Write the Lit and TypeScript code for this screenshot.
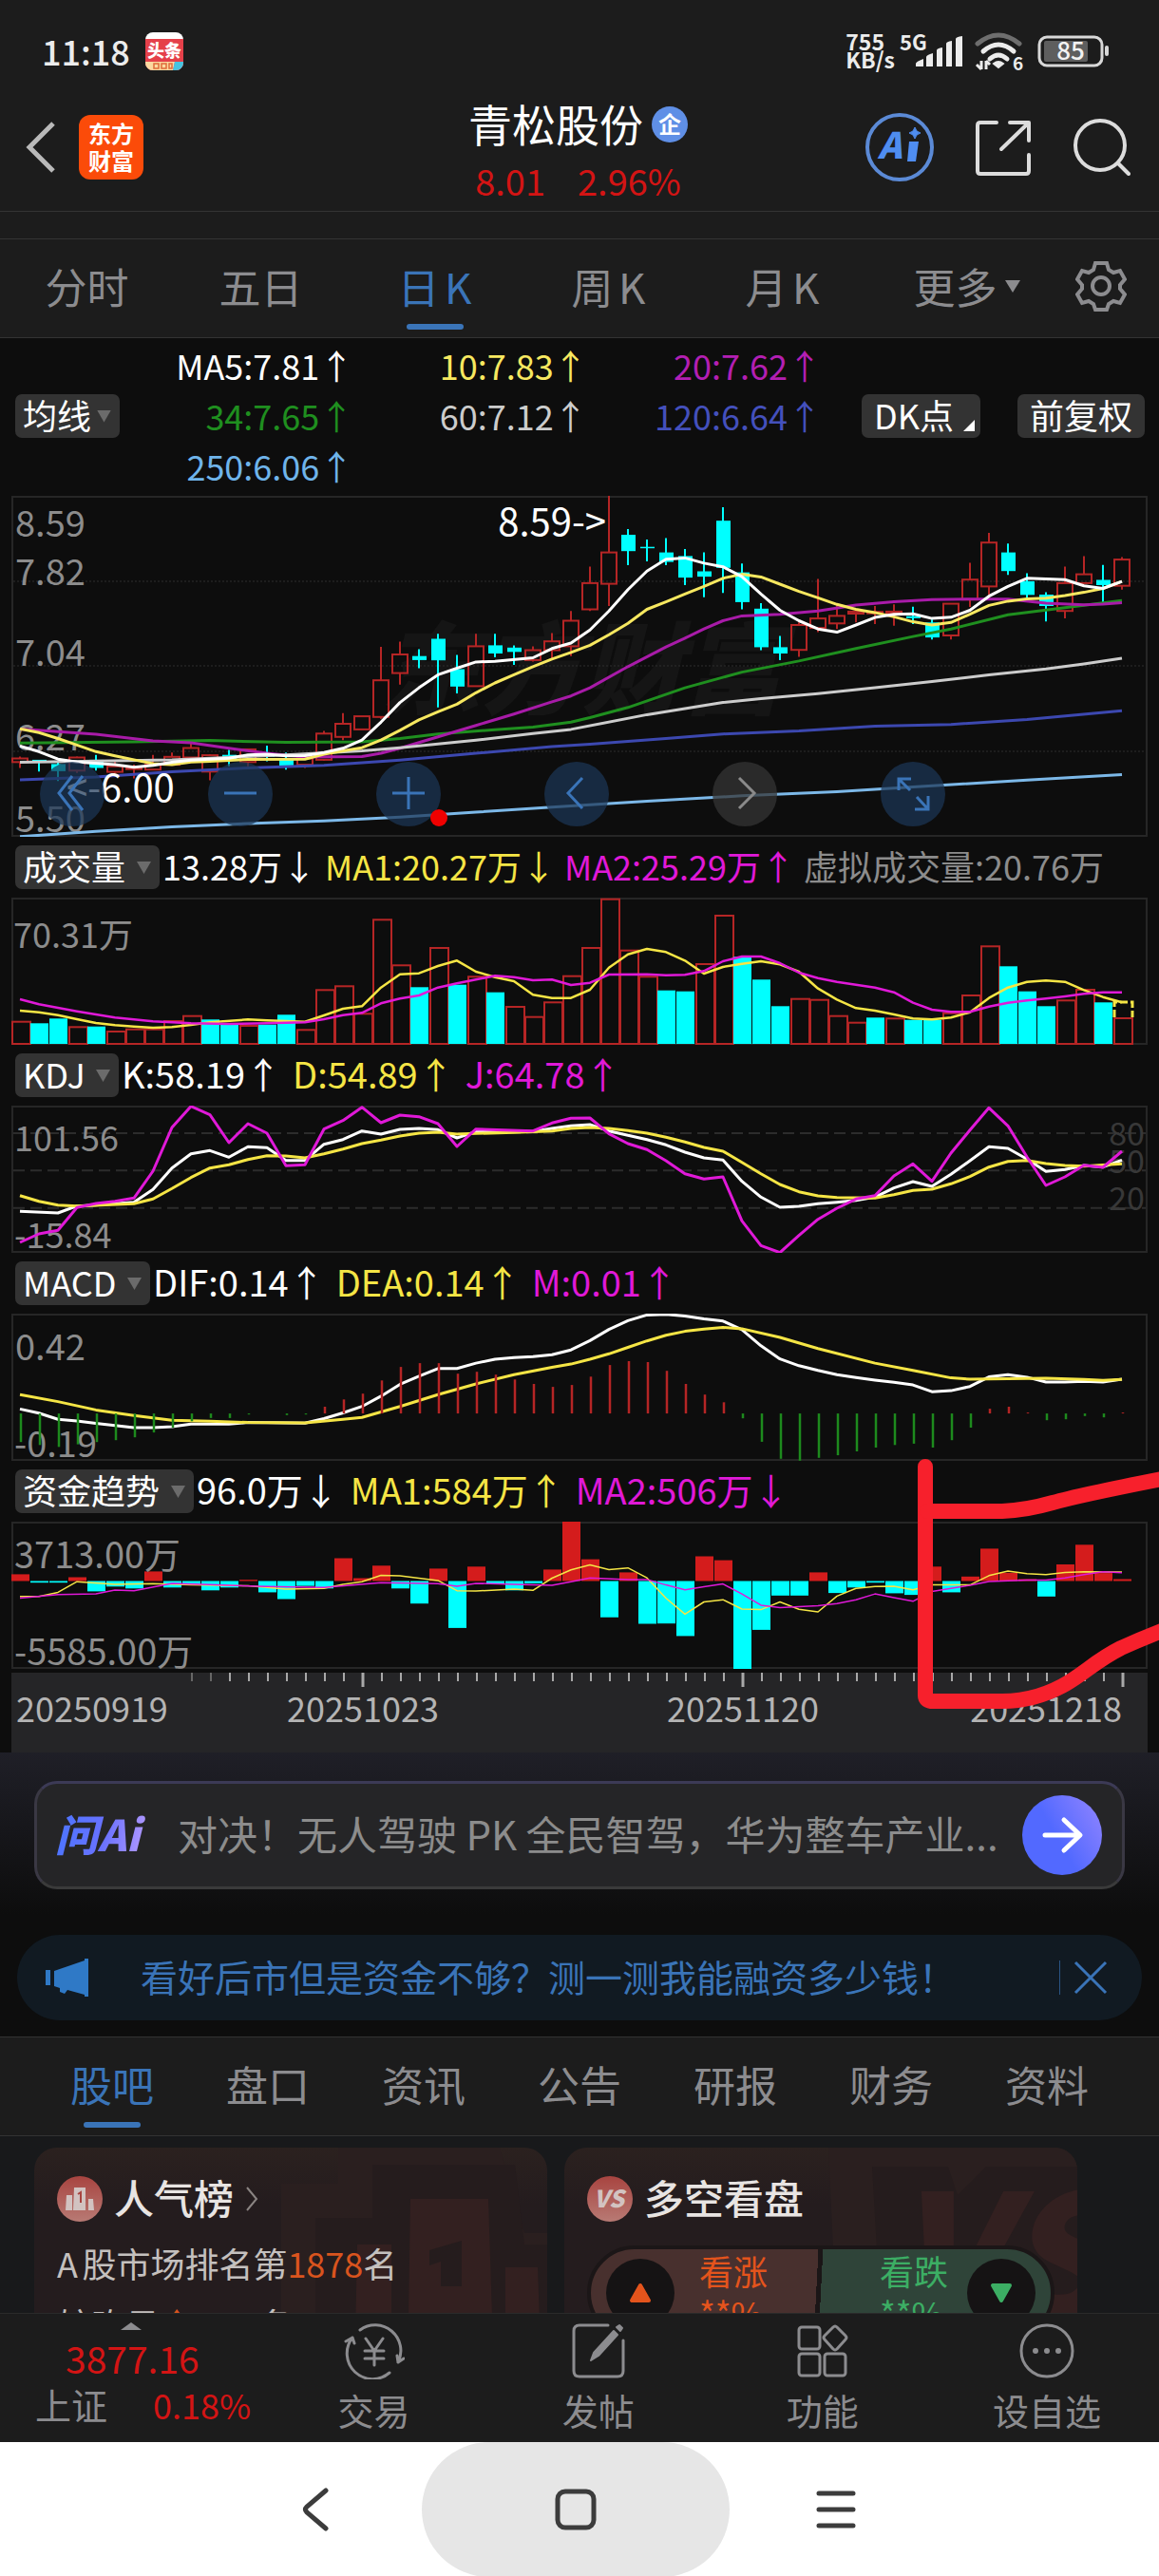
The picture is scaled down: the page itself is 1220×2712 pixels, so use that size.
import { LitElement, html, svg, css, nothing } from "lit";
import { customElement, property } from "lit/decorators.js";

type Point = [number, number];
interface Value { text: string; color: string }

const WHITE = "#ffffff";
const YELLOW = "#f5e545";
const MAGENTA = "#e019d8";
const RED = "#b52525";
const CYAN = "#00ffff";
const STEP = 20;
const WIDTH = 1196;
const xAt = (i: number) => 9 + i * STEP;

/** Parses "index,value index,value" into points. */
const parse = (s: string): Point[] =>
  s.trim().split(/\s+/).map((p) => p.split(",").map(Number) as Point);

/** Builds a mapper from stored chart levels to drawing units. */
const scale = (top: number, unit: number) => (v: number) =>
  Math.round(((v - top) / unit) * 10) / 10;

const line = (s: string, y: (v: number) => number, color: string, width = 3) => svg`
  <polyline fill="none" stroke=${color} stroke-width=${width} stroke-linejoin="round"
    points=${parse(s).map(([i, v]) => `${xAt(i)},${y(v)}`).join(" ")}></polyline>`;

const frame = (h: number) => svg`
  <rect x="1" y="1" width=${WIDTH - 2} height=${h - 2} fill="none" stroke="#262626" stroke-width="2"></rect>`;

const label = (x: number, mid: number, text: string, fill = "#8c8c8c", size = 38, anchor = "start") => svg`
  <text x=${x} y=${mid + Math.round(size * 0.37)} fill=${fill} font-size=${size} text-anchor=${anchor}>${text}</text>`;

// up/down, body top, body bottom, high, low
const CANDLES = `
r,1301,1312,1295,1330 c,1305,1311,1306,1341 c,1318,1340,1310,1370 r,1298,1338,1295,1345
c,1305,1330,1290,1338 r,1325,1342,1310,1345 r,1329,1333,1320,1362 r,1320,1335,1290,1337
r,1296,1320,1283,1322 r,1269,1298,1252,1300 r,1291,1341,1288,1368 c,1290,1308,1275,1325
r,1273,1312,1271,1325 c,1291,1296,1262,1310 c,1305,1323,1283,1335 r,1301,1320,1298,1330
r,1225,1305,1217,1308 r,1195,1235,1162,1245 r,1172,1212,1172,1212 r,1062,1174,960,1180
r,983,1040,944,1075 c,988,1000,967,1025 c,935,1001,920,1145 c,1028,1081,984,1102
r,958,1080,920,1082 c,955,980,920,992 c,962,975,955,1015 r,970,1000,958,1005
r,943,970,918,1000 r,880,958,850,988 r,765,845,714,850 r,671,767,498,835
c,617,667,600,710 c,654,658,632,698 c,671,700,627,710 c,682,748,661,771
c,729,745,671,808 c,574,718,533,795 c,732,823,705,845 c,843,961,826,970
c,961,980,926,1000 r,893,969,885,990 r,873,902,752,915 r,865,888,830,905
r,852,858,848,885 r,853,856,835,890 r,852,856,830,895 c,866,872,837,890
c,885,931,876,937 r,828,925,826,937 r,754,815,703,838 r,641,775,611,800
c,671,728,644,740 c,759,801,735,810 c,800,835,793,882 r,765,850,714,873
r,738,765,682,767 c,755,771,709,825 r,693,773,685,785`;

const MA_LINES: [string, string][] = [
  ["#7cb8e8", "0,1540 4,1524 8,1510 12,1500 16,1492 20,1480 24,1465 28,1450 33,1432 38,1415 43,1403 47,1388 53,1367 58,1350"],
  ["#3c48b0", "0,1366 4,1358 8,1342 12,1330 16,1322 20,1306 24,1285 28,1265 30,1257 34,1240 37,1226 41,1217 45,1202 49,1197 53,1182 58,1155"],
  ["#1f8f1f", "0,1254 6,1250 10,1246 14,1252 18,1250 20,1240 22,1226 25,1213 27,1205 29,1190 30,1176 32,1145 35,1085 38,1037 41,1003 44,965 47,928 49,905 52,862 55,840 58,818"],
  ["#a81ba8", "0,1211 4,1227 7,1247 9,1253 11,1270 13,1285 15,1297 18,1295 19,1285 20,1270 22,1235 24,1200 26,1165 28,1128 29,1110 30,1085 32,1020 34,960 35,933 36,905 37,880 38,865 40,860 42,850 44,832 46,822 48,815 50,814 52,814 54,826 56,831 57,829 58,825"],
  ["#cccccc", "0,1313 8,1305 14,1290 18,1278 20,1268 24,1245 27,1225 29,1212 33,1167 37,1130 39,1118 42,1103 45,1085 48,1066 51,1045 54,1027 56,1012 58,995"],
  ["#f7e860", "0,1210 1,1222 2,1240 3,1260 4,1280 5,1293 6,1305 7,1317 8,1320 9,1312 10,1310 12,1304 15,1303 16,1288 17,1278 18,1268 19,1245 20,1215 21,1183 22,1158 23,1135 24,1100 25,1070 26,1045 27,1020 28,997 29,977 30,955 31,923 32,888 33,845 34,822 35,798 36,775 37,750 38,738 39,746 40,768 41,790 42,810 43,830 44,845 45,855 46,868 47,883 48,893 49,885 50,860 51,833 52,820 53,813 54,811 55,803 56,793 57,781 58,760"],
  ["#ffffff", "0,1263 1,1280 2,1303 3,1312 5,1320 6,1328 7,1322 8,1313 9,1306 11,1300 12,1290 13,1288 14,1293 15,1292 16,1283 17,1270 18,1245 19,1190 20,1130 21,1085 22,1045 23,1025 24,1006 25,1004 27,993 28,965 29,948 30,908 31,850 32,785 33,728 34,692 35,688 36,704 37,715 38,745 39,798 40,848 41,880 42,905 43,915 44,893 45,870 46,860 47,859 48,873 49,869 50,848 51,805 52,775 53,750 55,754 56,773 57,781 58,760"],
];

const VOLUMES = "r580 c588 c573 r597 c598 r611 r604 r604 r578 r562 c576 c593 r593 c592 c561 r606 r480 r468 r555 r258 r402 c474 r347 c466 r438 c490 r533 r565 r519 r436 r347 r193 r355 r438 c484 c487 r398 r245 c378 c450 c534 r508 r511 r562 r583 c570 r570 c577 c577 r553 r497 r342 c408 c487 c534 r513 r479 c522 r569";
const VOL_MA1 = "0,548 1,553 2,562 3,575 4,587 5,594 6,598 7,602 8,600 9,593 10,585 12,576 13,579 15,583 16,563 17,542 18,534 19,475 20,433 21,430 22,407 23,390 24,425 25,442 26,455 27,498 28,508 29,508 30,482 31,412 32,370 33,353 34,363 35,390 36,431 37,410 38,400 39,392 40,402 41,425 42,478 43,513 44,540 45,548 46,560 47,573 48,576 49,570 50,553 51,508 52,475 53,457 54,453 55,457 56,483 57,505 58,522";
const VOL_MA2 = "0,512 1,528 3,550 5,570 7,582 9,588 11,590 13,588 15,585 16,575 17,562 18,555 19,525 20,510 21,500 22,475 23,462 24,450 25,438 26,442 27,452 28,450 29,467 30,460 31,434 33,433 34,436 35,435 36,423 37,392 38,377 39,377 40,398 41,428 42,445 43,457 44,466 45,475 46,490 47,523 48,545 49,552 50,552 51,535 52,523 53,516 54,510 55,503 56,495 57,490 58,490";

const KDJ_K = "0,1182 2,1187 3,1165 4,1162 6,1153 7,1113 8,1045 9,1000 10,990 11,1011 12,978 13,981 14,1021 15,1021 16,970 17,955 18,928 19,938 20,923 21,920 22,924 23,950 24,930 27,930 28,920 29,912 30,908 31,928 32,942 33,955 34,972 35,995 36,1013 37,1020 38,1087 39,1137 40,1169 41,1166 42,1158 43,1153 44,1147 45,1137 46,1108 47,1088 48,1103 49,1065 50,1022 51,978 52,983 53,1017 54,1056 55,1050 56,1037 57,1042 58,1020";
const KDJ_D = "0,1132 1,1150 2,1162 3,1165 6,1158 7,1143 8,1110 9,1075 10,1045 11,1035 12,1018 13,1006 14,1007 15,1013 16,1000 17,985 18,968 19,957 20,944 21,935 22,932 23,938 24,936 26,933 28,928 29,920 30,917 31,920 32,927 33,935 34,948 35,963 36,980 37,992 38,1027 39,1063 40,1097 41,1120 42,1133 43,1138 45,1140 46,1129 47,1116 48,1112 49,1095 50,1072 51,1042 52,1024 53,1021 54,1031 55,1037 56,1039 58,1032";
const KDJ_J = "0,1280 1,1253 2,1242 3,1170 4,1157 5,1150 6,1140 7,1055 8,917 9,850 10,877 11,965 12,905 13,935 14,1038 15,1035 16,922 17,895 18,853 19,902 20,878 21,883 22,905 23,977 24,922 27,928 28,903 29,888 30,887 31,937 32,968 33,987 34,1022 35,1063 36,1080 37,1073 38,1212 39,1290 40,1312 41,1258 42,1207 43,1172 44,1143 45,1132 46,1070 47,1032 48,1087 49,998 50,925 51,855 52,912 53,1010 54,1100 55,1073 56,1036 57,1043 58,992";

const MACD_DIF = "0,480 1,493 2,512 3,517 4,525 6,538 7,538 8,535 9,527 11,527 12,522 15,524 16,510 17,492 18,472 19,440 20,403 21,378 22,354 23,354 24,337 25,325 26,320 27,317 28,311 29,296 30,267 31,232 32,205 33,187 34,185 35,190 36,199 37,206 38,233 39,283 40,324 41,345 42,360 43,373 44,382 45,390 46,397 47,405 48,426 49,423 50,410 51,380 52,373 53,381 54,396 55,396 56,394 57,396 58,387";
const MACD_DEA = "0,435 2,457 4,483 6,500 8,515 10,518 12,522 15,523 17,512 18,506 20,472 22,435 24,402 26,373 28,350 29,340 30,325 31,308 32,288 33,268 34,250 35,238 36,231 37,226 38,230 40,257 42,292 45,337 47,360 49,383 50,387 54,384 56,388 57,391 58,388";
const MACD_BARS = [583, 592, 598, 590, 583, 577, 568, 553, 538, 518, 508, 508, 497, 494, 499, 497, 473, 450, 432, 391, 349, 337, 337, 370, 364, 373, 388, 402, 411, 405, 379, 343, 331, 334, 361, 402, 435, 459, 509, 582, 635, 641, 632, 624, 612, 600, 592, 588, 600, 577, 538, 479, 473, 491, 515, 512, 502, 506, 491];

const FUND_BARS = [994, 1020, 1020, 1003, 1047, 1032, 1038, 985, 1035, 1028, 1044, 1035, 1011, 1050, 1071, 1030, 1038, 944, 1006, 967, 1038, 1085, 976, 1161, 970, 1025, 1044, 1022, 979, 830, 947, 1128, 988, 1148, 1147, 1186, 938, 950, 1291, 1167, 1060, 1060, 988, 1052, 1035, 1020, 1053, 1058, 970, 1050, 1001, 914, 989, 1009, 1063, 963, 902, 990, 1009];
const FUND_MA1 = "0,1063 1,1063 2,1050 3,1017 5,1025 7,1023 9,1027 12,1030 14,1040 16,1038 17,1025 18,1017 19,997 20,999 22,1013 23,1045 24,1046 26,1040 27,1044 28,1006 29,980 30,965 31,979 32,974 33,1005 34,1068 35,1118 36,1080 37,1073 38,1102 39,1104 40,1080 41,1103 42,1111 43,1062 44,1038 45,1032 46,1031 47,1042 48,1027 50,1027 51,998 52,984 53,992 54,995 55,988 56,986 58,987";
const FUND_MA2 = "0,1068 2,1057 4,1055 5,1043 6,1045 8,1022 10,1026 13,1032 16,1035 19,1020 22,1023 23,1031 24,1022 26,1025 28,1028 29,1017 30,1005 32,1010 33,1010 34,1027 35,1042 36,1033 37,1024 38,1055 39,1090 40,1098 42,1092 43,1085 44,1073 45,1055 46,1067 47,1078 48,1047 49,1038 50,1028 51,1016 53,1012 54,1012 55,1005 56,995 57,986 58,989";

const FONT = css`"Noto Sans CJK SC", "Noto Sans", sans-serif`;

const reset = css`
  * { box-sizing: border-box; margin: 0; padding: 0; }
  button, select, input { font: inherit; color: inherit; border: 0; background: none; }
  button, select { cursor: pointer; }
  a { color: inherit; text-decoration: none; }
  svg { display: block; }
`;

@customElement("indicator-select")
class IndicatorSelect extends LitElement {
  @property() name = "";
  static styles = [reset, css`
    :host { display: block; position: relative; height: 46px; border-radius: 7px; background: #333333; font-family: ${FONT}; }
    select {
      display: block; appearance: none; height: 42px; line-height: 42px; padding: 0 35px 0 8px;
      color: #ffffff; font-size: 36px;
    }
    :host([tight]) select { padding-right: 29px; }
    :host::after {
      content: ""; position: absolute; right: 9px; top: 17px; width: 15px; height: 13px;
      background: #6b6b6b; clip-path: polygon(0 0, 100% 0, 50% 100%); pointer-events: none;
    }
  `];
  render() {
    return html`<select aria-label="指标"><option>${this.name}</option></select>`;
  }
}

@customElement("indicator-panel")
class IndicatorPanel extends LitElement {
  @property() name = "";
  @property({ attribute: false }) values: Value[] = [];
  @property({ attribute: false }) plot: unknown = nothing;
  static styles = [reset, css`
    :host { display: block; font-family: ${FONT}; }
    .panel { padding: 0 12px; }
    .head { display: flex; align-items: center; gap: 3px; height: 64px; padding-left: 4px; }
    .values { display: flex; gap: 12px; padding-bottom: 5px; font-size: 38px; line-height: 46px; white-space: nowrap; }
    :host([dense]) .values { gap: 9px; font-size: 36px; }
    .white { color: #ffffff; } .yellow { color: #f5e545; } .magenta { color: #e019d8; } .gray { color: #8c8c8c; }
    .plot { width: 100%; height: auto; }
  `];
  render() {
    return html`
      <div class="panel">
        <div class="head">
          <indicator-select name=${this.name}></indicator-select>
          <div class="values">${this.values.map((v) => html`<span class=${v.color}>${v.text}</span>`)}</div>
        </div>
        <svg class="plot" viewBox="0 0 1196 155" role="img" aria-label=${this.name}>${frame(155)}${this.plot}</svg>
      </div>`;
  }
}

@customElement("app-root")
class AppRoot extends LitElement {
  static styles = [reset, css`
    :host {
      display: flex; flex-direction: column; min-height: 100vh; overflow: hidden;
      background: #0d0d0d; color: #8c8c8f; font-family: ${FONT};
    }
    .status {
      display: flex; justify-content: space-between; align-items: flex-start; height: 98px;
      padding: 30px 50px 0 44px; background: #1c1c1c; color: #ececec;
    }
    .status-side { display: flex; align-items: center; height: 48px; }
    .clock { font-size: 36px; font-weight: 500; line-height: 46px; margin-right: 16px; padding-bottom: 2px; }
    .rate { font-size: 23px; font-weight: 700; line-height: 19px; margin-right: 4px; padding-bottom: 2px; }

    .header {
      display: grid; grid-template-columns: 1fr auto 1fr; background: #1c1c1c;
      padding: 0 30px 0 27px; border-bottom: 1px solid #333333;
    }
    .header-side { display: flex; align-items: center; height: 114px; }
    .header-side.left { gap: 24px; }
    .header-side.right { justify-content: flex-end; gap: 42px; }
    .brand {
      width: 68px; height: 68px; border-radius: 12px; background: #fb4b09; color: #ffffff;
      font-size: 24px; font-weight: 700; line-height: 29px; text-align: center; padding-top: 4px;
    }
    .title { text-align: center; }
    .name {
      display: flex; align-items: center; justify-content: center; gap: 9px;
      font-size: 46px; font-weight: 400; line-height: 62px; color: #ffffff;
    }
    .badge {
      width: 38px; height: 38px; border-radius: 50%; background: #5f8fe6; color: #ffffff;
      font-size: 24px; font-weight: 700; line-height: 35px; margin-top: 3px;
    }
    .quote {
      display: flex; justify-content: center; gap: 34px; padding-bottom: 2px;
      font-size: 38px; line-height: 60px; color: #d31414;
    }
    .strip { height: 28px; background: #1c1c1c; }

    .periods {
      display: grid; grid-template-columns: repeat(6, 3fr) 2fr; background: #1c1c1c;
      border-top: 1px solid #333333; border-bottom: 1px solid #333333;
    }
    .tab {
      display: flex; align-items: center; justify-content: center; gap: 8px; position: relative;
      height: 103px; padding-bottom: 5px; font-size: 44px; line-height: 60px; color: #8c8c8f;
      text-autospace: normal;
    }
    .tab.more { padding-left: 22px; }
    .tab.on { color: #3a74b8; }
    .tab.on::after {
      content: ""; position: absolute; left: 50%; bottom: 8px; width: 60px; height: 6px;
      margin-left: -30px; border-radius: 3px; background: #3a74b8;
    }

    .charts { position: relative; }
    .legend-row { display: flex; align-items: center; padding: 2px 15px 5px 16px; }
    .legend {
      flex: 1; display: grid; grid-template-columns: repeat(3, 1fr);
      font-size: 36px; line-height: 53px; text-align: right; white-space: nowrap;
    }
    .c5 { color: #ffffff; } .c10 { color: #f7e860; } .c20 { color: #b31fb3; } .c34 { color: #1f8f1f; }
    .c60 { color: #cccccc; } .c120 { color: #4450bc; } .c250 { color: #6fb4ea; }
    .chip {
      height: 46px; line-height: 42px; padding: 0 13px 4px; border-radius: 7px; background: #333333;
      color: #ffffff; font-size: 36px; white-space: nowrap;
    }
    .chip.dk { display: flex; align-items: flex-end; gap: 10px; padding: 0 6px 4px 13px; margin: 0 39px 0 42px; }
    .chip.dk svg { margin-bottom: 3px; }
    .price { position: relative; margin: 0 12px; }
    .plot { width: 100%; height: auto; }
    .pin { position: absolute; inset: 0; pointer-events: none; }
    .tools { position: absolute; left: 30px; bottom: 11px; display: flex; gap: 109px; }
    .tool {
      width: 68px; height: 68px; border-radius: 50%; background: rgba(28, 54, 86, 0.72);
      display: grid; place-items: center; stroke: #3a74b8;
    }
    .tool.off { background: rgba(52, 52, 52, 0.75); stroke: #8a8a8a; }
    .axis { margin: 4px 12px 0; background: #252527; }
    .mark { position: absolute; right: 0; bottom: 34px; pointer-events: none; }

    .promo { background: linear-gradient(#1f1f27 0, #0d0d0d 170px); padding: 30px 18px 17px; }
    .ask {
      display: flex; align-items: center; height: 114px; margin: 0 18px; padding: 0 21px 0 19px;
      border: 3px solid #3a3844; border-top-color: #3c3a56; border-bottom-color: #3a3a3a;
      border-radius: 24px; background: #252527;
    }
    .ask-logo {
      width: 104px; font-size: 45px; font-weight: 900; font-style: italic; line-height: 60px; white-space: nowrap;
      background: linear-gradient(100deg, #4f74ff 10%, #6a72ff 50%, #b49aff 90%);
      -webkit-background-clip: text; background-clip: text; color: transparent; padding-bottom: 4px;
    }
    .ask-input {
      flex: 1; min-width: 0; margin-left: 25px; padding-bottom: 4px;
      font-size: 42px; line-height: 60px; outline: none;
    }
    .ask-input::placeholder { color: #8c8c8c; opacity: 1; }
    .ask-go {
      width: 84px; height: 84px; border-radius: 50%; display: grid; place-items: center;
      background: linear-gradient(60deg, #5269ff 45%, #9486ff 100%);
    }
    .banner {
      display: flex; align-items: center; height: 90px; margin-top: 48px; padding: 0 36px 0 30px;
      border-radius: 45px; background: #111a22; color: #3a74b8;
    }
    .banner-link { flex: 1; margin-left: 54px; padding-bottom: 5px; font-size: 39px; line-height: 56px; white-space: nowrap; }
    .banner-close { display: flex; align-items: center; gap: 14px; }
    .rule { width: 1px; height: 36px; background: #2a5484; }

    .sections {
      display: grid; grid-template-columns: repeat(7, 1fr); padding: 0 36px; background: #1c1c1c;
      border-top: 1px solid #333333; border-bottom: 1px solid #333333;
    }
    .cards {
      flex: 1 1 186px; height: 186px; overflow: hidden; display: grid; grid-template-columns: 1fr 1fr; gap: 18px;
      padding: 12px 86px 0 36px; background: #18191b;
    }
    .card {
      position: relative; height: 300px; border-radius: 24px; padding: 24px; overflow: hidden;
      background: linear-gradient(#2b211f, #241c1e 60px, #241c1e); color: #c4c0be;
    }
    .decor { position: absolute; right: 0; top: 0; }
    .card-title {
      position: relative; display: flex; align-items: center; gap: 12px; font-size: 42px; font-weight: 500;
      line-height: 60px; color: #e8e4e2;
    }
    .card-title span { line-height: 56px; padding-bottom: 4px; }
    .rank { position: relative; font-size: 36px; line-height: 64px; white-space: nowrap; }
    .rank.first { margin-top: 5px; }
    .market { text-autospace: normal; }
    .hot { color: #d9541e; }
    .vote {
      position: relative; display: grid; grid-template-columns: 1fr 1fr; height: 100px; margin-top: 19px;
      border: 4px solid #1b1617; border-radius: 50px; overflow: hidden;
      background: linear-gradient(93deg, #48302e 0 49%, #1b1617 49% 50%, #2f4439 50%);
    }
    .side { display: flex; align-items: flex-start; padding: 0 16px; gap: 26px; font-size: 36px; line-height: 44px; }
    .side.down { justify-content: flex-end; gap: 20px; }
    .up-text { color: #e4541c; text-align: left; }
    .down-text { color: #3cae64; text-align: left; }
    .knob { width: 72px; height: 72px; margin-top: 10px; border-radius: 50%; background: #151314; display: grid; place-items: center; }

    .bottom {
      display: grid; grid-template-columns: 7fr repeat(4, 6fr); height: 136px;
      background: #1c1c1c; border-top: 1px solid #2a2a2a;
    }
    .index {
      display: grid; grid-template-columns: auto auto; justify-content: start; align-content: start;
      column-gap: 48px; padding-left: 37px;
    }
    .index-arrow { grid-column: 1 / 3; margin-left: 90px; padding-top: 9px; }
    .index-value { grid-column: 1 / 3; font-size: 39px; line-height: 50px; color: #d31414; margin-top: 4px; padding-left: 32px; }
    .index-name { font-size: 38px; line-height: 48px; }
    .index-change { font-size: 36px; line-height: 48px; color: #d31414; }
    .action { display: flex; flex-direction: column; align-items: center; padding-top: 9px; font-size: 38px; line-height: 56px; color: #8c8c8f; }
    .action svg { margin-bottom: 4px; }
    .nav { display: flex; justify-content: center; height: 142px; padding-right: 8px; background: #ffffff; }
    .nav-button { width: 224px; display: grid; place-items: center; }
    .nav-button.home { width: 324px; border-radius: 71px; background: #e6e6e6; }
  `];

  private status() {
    return html`
      <div class="status">
        <div class="status-side">
          <span class="clock">11:18</span>
          <svg width="40" height="40" viewBox="0 0 40 40" role="img" aria-label="头条">
            <defs><clipPath id="ttc"><rect width="40" height="40" rx="8"></rect></clipPath></defs>
            <g clip-path="url(#ttc)">
              <rect width="40" height="40" fill="#ffffff"></rect>
              <rect y="7" width="40" height="33" fill="#e5404a"></rect>
              <path d="M0 31h31l-2 9H0z" fill="#fbd9a0"></path><path d="M31 31h9v9H29z" fill="#46c4e0"></path>
              <text x="20" y="26" text-anchor="middle" font-size="18" font-weight="900" fill="#ffffff">头条</text>
              <path d="M9 33h5v5H9zM17 33h5v5h-5zM25 33h3v5h-3z" fill="none" stroke="#e06a3a" stroke-width="1.5"></path>
            </g>
          </svg>
        </div>
        <div class="status-side">
          <span class="rate">755<br />KB/s</span>
          <svg width="224" height="46" viewBox="0 0 224 46" role="img" aria-label="5G 信号 WiFi 电量">
            <text x="1" y="22" font-size="22" font-weight="700" fill="#ececec">5G</text>
            <g fill="#ececec">
              <path d="M18 39v-3q0-2 8-5v8zM29 39V29q0-2 7-4v14zM40 39V22q0-2 6-3v20zM50 39V15q0-2 6-3v27zM60 39V10q0-2 7-3v32z"></path>
              <path d="M105 40l-5-4q5-4 10 0z" stroke="#ececec" stroke-width="2"></path>
              <path d="M87 42v-9M87 42l-5-5M92 42v-9M92 33l4 4" fill="none" stroke="#ececec" stroke-width="3"></path>
              <text x="120" y="43" font-size="19" font-weight="700">6</text>
            </g>
            <g fill="none" stroke-width="5" stroke-linecap="round">
              <path d="M96 31q9-8 18 0" stroke="#ececec"></path><path d="M89 23q16-14 32 0" stroke="#ececec"></path>
              <path d="M83 15q22-18 44 0" stroke="#6e6e6e"></path>
            </g>
            <rect x="148" y="8" width="66" height="30" rx="8" fill="none" stroke="#d8d8d8" stroke-width="3"></rect>
            <rect x="153" y="12" width="46" height="22" rx="2" fill="#5e5e5e"></rect>
            <rect x="217" y="17" width="4" height="11" rx="2" fill="#d8d8d8"></rect>
            <text x="181" y="32" text-anchor="middle" font-size="26" font-weight="500" fill="#f2f2f2">85</text>
          </svg>
        </div>
      </div>`;
  }

  private header() {
    return html`
      <header class="header">
        <div class="header-side left">
          <button aria-label="返回"><svg width="32" height="56" viewBox="0 0 32 56"><path d="M29 3L4 28l25 25" fill="none" stroke="#b9b9b9" stroke-width="5"></path></svg></button>
          <div class="brand">东方<br />财富</div>
        </div>
        <div class="title">
          <h1 class="name">青松股份<span class="badge">企</span></h1>
          <div class="quote"><span>8.01</span><span>2.96%</span></div>
        </div>
        <div class="header-side right">
          <button aria-label="AI">
            <svg width="74" height="74" viewBox="0 0 74 74">
              <circle cx="37" cy="37" r="34" fill="none" stroke="#5b8ad6" stroke-width="4"></circle>
              <text x="14" y="49" font-size="38" font-weight="900" font-style="italic" fill="#4f8df0">A</text>
              <path d="M47 31h10l-3 21h-9z" fill="#4f8df0"></path>
              <path d="M53 16q1 5 6 6-5 1-6 6-1-5-6-6 5-1 6-6z" fill="#4f8df0" stroke="#4f8df0"></path>
            </svg>
          </button>
          <button aria-label="分享">
            <svg width="60" height="60" viewBox="0 0 60 60" fill="none" stroke="#dcdcdc" stroke-width="4" stroke-linecap="round" stroke-linejoin="round">
              <path d="M23 4H6q-3 0-3 3v48q0 3 3 3h48q3 0 3-3V38M37 4h20v19M56 5L28 32"></path>
            </svg>
          </button>
          <button aria-label="搜索">
            <svg width="62" height="62" viewBox="0 0 62 62" fill="none" stroke="#dcdcdc" stroke-width="4" stroke-linecap="round">
              <circle cx="30" cy="29" r="26"></circle><path d="M49 48l11 11"></path>
            </svg>
          </button>
        </div>
      </header>`;
  }

  private periods() {
    const tabs = ["分时", "五日", "日K", "周K", "月K"];
    return html`
      <div class="strip"></div>
      <nav class="periods">
        ${tabs.map((t) => html`<button class="tab ${t === "日K" ? "on" : ""}">${t}</button>`)}
        <button class="tab more" aria-haspopup="true">更多<svg width="16" height="13" viewBox="0 0 16 13"><path d="M0 0h16L8 13z" fill="#8c8c8f"></path></svg></button>
        <button class="tab" aria-label="设置">
          <svg width="54" height="54" viewBox="0 0 54 54" fill="none" stroke="#8c8c8f" stroke-width="4">
            <path d="M21 3h12l2 7 5 3 7-2 5 9-5 6v4l5 6-5 9-7-2-5 3-2 6H21l-2-6-5-3-7 2-5-9 5-6v-4l-5-6 5-9 7 2 5-3z"></path>
            <circle cx="27" cy="27" r="9"></circle>
          </svg>
        </button>
      </nav>`;
  }

  private price() {
    const y = scale(498, 2.904);
    const candles = CANDLES.trim().split(/\s+/).map((row, i) => {
      const [kind, ...n] = row.split(",");
      const [top, bottom, high, low] = n.map(Number).map(y);
      const x = xAt(i);
      const h = Math.max(bottom - top, 1.5);
      return kind === "c"
        ? svg`<path d=${`M${x} ${high}V${low}`} stroke=${CYAN} stroke-width="2"></path>
              <rect x=${x - 7} y=${top} width="15" height=${h} fill=${CYAN}></rect>`
        : svg`<path d=${`M${x} ${high}V${top}M${x} ${bottom}V${low}`} stroke=${RED} stroke-width="2"></path>
              <rect x=${x - 8} y=${top} width="16" height=${h} fill="none" stroke=${RED} stroke-width="2"></rect>`;
    });
    return svg`
      <text x="388" y="222" font-size="106" font-weight="900" font-style="italic" fill="#151515">东方财富</text>
      ${[90, 179, 269].map((g) => svg`<path d=${`M2 ${g}H1194`} stroke="#2e2e2e" stroke-width="1" stroke-dasharray="2 2"></path>`)}
      ${frame(359)}
      ${candles}
      ${label(4, 29, "8.59")}${label(4, 80, "7.82")}${label(4, 165, "7.04")}${label(4, 254, "6.27")}${label(4, 340, "5.50")}
      ${MA_LINES.map(([color, pts]) => line(pts, y, color))}
      ${label(626, 27, "8.59->", WHITE, 40, "end")}${label(58, 307, "<-6.00", WHITE, 40)}`;
  }

  private volume() {
    const y = scale(191, 3);
    return svg`
      ${VOLUMES.split(" ").map((v, i) => {
        const top = y(Number(v.slice(1)));
        return v[0] === "c"
          ? svg`<rect x=${xAt(i) - 9} y=${top} width="19" height=${154 - top} fill=${CYAN}></rect>`
          : svg`<rect x=${xAt(i) - 8} y=${top + 1} width="19" height=${153 - top} fill="none" stroke=${RED} stroke-width="2"></rect>`;
      })}
      <path d="M1161 126V110H1180V126" fill="none" stroke="#f5e545" stroke-width="3" stroke-dasharray="8 3"></path>
      ${line(VOL_MA1, y, YELLOW, 2.5)}${line(VOL_MA2, y, MAGENTA, 2.5)}
      ${label(2, 40, "70.31万", "#8c8c8c", 36)}`;
  }

  private kdj() {
    const y = scale(848, 3);
    return svg`
      ${[935, 1053, 1171].map((g) => svg`<path d=${`M2 ${y(g)}H1194`} stroke="#2c2c2c" stroke-width="2" stroke-dasharray="12 6"></path>`)}
      ${label(1193, 29, "80", "#383838", 34, "end")}${label(1193, 58, "50", "#383838", 34, "end")}${label(1193, 97, "20", "#383838", 34, "end")}
      ${label(3, 35, "101.56", "#8c8c8c", 36)}${label(3, 137, "-15.84", "#8c8c8c", 36)}
      ${line(KDJ_K, y, WHITE)}${line(KDJ_D, y, YELLOW)}${line(KDJ_J, y, MAGENTA)}`;
  }

  private macd() {
    const y = scale(183, 2.958);
    return svg`
      ${label(4, 35, "0.42")}${label(3, 137, "-0.19")}
      ${line(MACD_DIF, y, WHITE)}${line(MACD_DEA, y, YELLOW)}
      ${MACD_BARS.map((v, i) => svg`<path d=${`M${xAt(i) + 1} ${y(494)}V${y(v)}`} stroke=${v < 494 ? RED : "#1d8a1d"} stroke-width="2.5"></path>`)}`;
  }

  private fund() {
    const y = scale(830, 2.958);
    const zero = y(1015);
    return svg`
      ${FUND_BARS.map((v, i) => svg`<rect x=${xAt(i) - 9} y=${Math.min(zero, y(v))} width="19" height=${Math.abs(y(v) - zero)} fill=${v < 1015 ? "#d41c1c" : CYAN}></rect>`)}
      ${line(FUND_MA1, y, YELLOW, 1.5)}${line(FUND_MA2, y, MAGENTA, 1.5)}
      ${label(3, 35, "3713.00万")}${label(3, 137, "-5585.00万")}`;
  }

  private axis() {
    return svg`
      ${Array.from({ length: 50 }, (_, k) => k + 9).map((i) => {
        const major = i % 20 === 18;
        return svg`<path d=${`M${xAt(i) + 1} 0v${major ? 15 : 9}`} stroke=${i < 11 ? "#666666" : "#a8a8a8"} stroke-width=${major ? 3 : 2}></path>`;
      })}
      ${label(5, 39, "20250919", "#b4b4b4", 36)}${label(370, 39, "20251023", "#b4b4b4", 36, "middle")}
      ${label(770, 39, "20251120", "#b4b4b4", 36, "middle")}${label(1169, 39, "20251218", "#b4b4b4", 36, "end")}`;
  }

  private charts() {
    const tools = [
      ["最早", svg`<path d="M33 14L19 32l14 18M44 14L30 32l14 18"></path>`],
      ["缩小", svg`<path d="M16 32h34"></path>`],
      ["放大", svg`<path d="M16 32h34M33 15v34"></path>`],
      ["向左", svg`<path d="M39 16L24 32l15 16"></path>`],
      ["向右", svg`<path d="M27 16l16 16-16 16"></path>`],
      ["全屏", svg`<path d="M31 17H18v12M18 17l12 12M35 49h14V35M49 49L37 36"></path>`],
    ] as const;
    return html`
      <main class="charts">
        <div class="legend-row">
          <indicator-select tight name="均线"></indicator-select>
          <div class="legend">
            <span class="c5">MA5:7.81↑</span><span class="c10">10:7.83↑</span><span class="c20">20:7.62↑</span>
            <span class="c34">34:7.65↑</span><span class="c60">60:7.12↑</span><span class="c120">120:6.64↑</span>
            <span class="c250">250:6.06↑</span>
          </div>
          <button class="chip dk">DK点<svg width="12" height="12" viewBox="0 0 12 12"><path d="M12 0v12H0z" fill="#ffffff"></path></svg></button>
          <button class="chip">前复权</button>
        </div>
        <div class="price">
          <svg class="plot" viewBox="0 0 1196 359" role="img" aria-label="日K线">${this.price()}</svg>
          <div class="tools">
            ${tools.map(([name, icon]) => html`
              <button class="tool ${name === "向右" ? "off" : ""}" aria-label=${name}>
                <svg width="66" height="66" viewBox="0 0 66 66" fill="none" stroke-width="3">${icon}</svg>
              </button>`)}
          </div>
          <svg class="plot pin" viewBox="0 0 1196 359" aria-hidden="true"><circle cx="450" cy="339" r="9" fill="#f00000"></circle></svg>
        </div>
        <indicator-panel dense name="成交量" .plot=${this.volume()} .values=${[
          { text: "13.28万↓", color: "white" }, { text: "MA1:20.27万↓", color: "yellow" },
          { text: "MA2:25.29万↑", color: "magenta" }, { text: "虚拟成交量:20.76万", color: "gray" }]}></indicator-panel>
        <indicator-panel name="KDJ" .plot=${this.kdj()} .values=${[
          { text: "K:58.19↑", color: "white" }, { text: "D:54.89↑", color: "yellow" }, { text: "J:64.78↑", color: "magenta" }]}></indicator-panel>
        <indicator-panel name="MACD" .plot=${this.macd()} .values=${[
          { text: "DIF:0.14↑", color: "white" }, { text: "DEA:0.14↑", color: "yellow" }, { text: "M:0.01↑", color: "magenta" }]}></indicator-panel>
        <indicator-panel name="资金趋势" .plot=${this.fund()} .values=${[
          { text: "96.0万↓", color: "white" }, { text: "MA1:584万↑", color: "yellow" }, { text: "MA2:506万↓", color: "magenta" }]}></indicator-panel>
        <div class="axis"><svg class="plot" viewBox="0 0 1196 84" role="img" aria-label="日期">${this.axis()}</svg></div>
        <svg class="mark" width="254" height="280" viewBox="0 0 254 280" fill="none" stroke="#f7202c" stroke-width="16" stroke-linecap="round" stroke-linejoin="round" aria-hidden="true">
          <path d="M8 13V254q0 6 8 6H89Q122 260 152 244C176 231 186 218 214 204Q236 194 262 184"></path>
          <path d="M10 60H89Q114 59 142 51T262 25"></path>
        </svg>
      </main>`;
  }

  private promo() {
    return html`
      <section class="promo">
        <form class="ask" @submit=${(e: Event) => e.preventDefault()}>
          <span class="ask-logo">问Ai</span>
          <input class="ask-input" type="text" aria-label="问Ai" placeholder="对决！无人驾驶 PK 全民智驾，华为整车产业..." />
          <button class="ask-go" aria-label="发送">
            <svg width="46" height="46" viewBox="0 0 46 46" fill="none" stroke="#ffffff" stroke-width="5" stroke-linecap="round" stroke-linejoin="round"><path d="M5 23h36M25 7l17 16-17 16"></path></svg>
          </button>
        </form>
        <div class="banner">
          <svg width="46" height="40" viewBox="0 0 46 40" fill="#2f79c6"><path d="M0 12h5v16H0zM9 13L41 2V0h4v40h-4v-2l-18-5-3 4-5-2v-4l-6-2z"></path></svg>
          <a class="banner-link" href="#">看好后市但是资金不够？测一测我能融资多少钱！</a>
          <div class="banner-close">
            <span class="rule"></span>
            <button aria-label="关闭"><svg width="36" height="36" viewBox="0 0 36 36" stroke="#3a74b8" stroke-width="3"><path d="M2 2l32 32M34 2L2 34"></path></svg></button>
          </div>
        </div>
      </section>`;
  }

  private cards() {
    const tabs = ["股吧", "盘口", "资讯", "公告", "研报", "财务", "资料"];
    return html`
      <nav class="sections">${tabs.map((t, i) => html`<a href="#" class="tab ${i === 0 ? "on" : ""}">${t}</a>`)}</nav>
      <section class="cards">
        <article class="card">
          <svg class="decor" width="280" height="300" viewBox="0 0 280 300" aria-hidden="true">
            <path d="M0 38h60V0h170l26 90h24v210H0z" fill="#2a1f1f"></path>
            <path d="M36 74h60V18h150l10 84h24v198H36z" fill="#251c1d"></path>
            <path d="M136 54h82l8 246h-94zM80 102h36v198H76zM236 126h34l6 174h-40z" fill="#332020"></path>
            <path d="M156 108l34-10v48h-22v-26l-12 4z" fill="#251c1d"></path>
          </svg>
          <h2 class="card-title">
            <svg width="48" height="48" viewBox="0 0 48 48">
              <defs><linearGradient id="g1" x2="0" y2="1"><stop stop-color="#a84440"></stop><stop offset="1" stop-color="#b87a74"></stop></linearGradient></defs>
              <circle cx="24" cy="24" r="24" fill="url(#g1)"></circle>
              <path d="M10 20h6v16H9zM18 12h12v24H17zM33 24h5l1 12h-6z" fill="#d2c3c1"></path>
              <path d="M22 19l3-2v11" fill="none" stroke="#a84440" stroke-width="2"></path>
            </svg>
            <span>人气榜</span>
            <svg width="14" height="26" viewBox="0 0 14 26"><path d="M2 1l10 12L2 25" fill="none" stroke="#8a8482" stroke-width="2"></path></svg>
          </h2>
          <p class="rank first"><span class="market">A股市场排名第</span><span class="hot">1878</span>名</p>
          <p class="rank">较昨日<span class="hot">↑776</span> 名</p>
        </article>
        <article class="card">
          <svg class="decor" width="280" height="300" viewBox="0 0 280 300" aria-hidden="true">
            <path d="M18 0h262v300H32z" fill="#2a1f1f"></path>
            <path d="M64 20h80l10 30 30-30h96v280H80z" fill="#251c1d"></path>
            <text x="84" y="180" font-size="180" font-weight="900" font-style="italic" fill="#332020">VS</text>
          </svg>
          <h2 class="card-title">
            <svg width="48" height="48" viewBox="0 0 48 48"><circle cx="24" cy="24" r="24" fill="url(#g2)"></circle>
              <defs><linearGradient id="g2" x2="0" y2="1"><stop stop-color="#a84440"></stop><stop offset="1" stop-color="#b87a74"></stop></linearGradient></defs>
              <text x="23" y="33" text-anchor="middle" font-size="25" font-weight="900" font-style="italic" fill="#d2c3c1">VS</text>
            </svg>
            <span>多空看盘</span>
          </h2>
          <div class="vote">
            <button class="side">
              <span class="knob"><svg width="24" height="22" viewBox="0 0 24 22"><path d="M12 3L3 19h18z" fill="#e4541c" stroke="#e4541c" stroke-width="4" stroke-linejoin="round"></path></svg></span>
              <span class="up-text">看涨<br />**%</span>
            </button>
            <button class="side down">
              <span class="down-text">看跌<br />**%</span>
              <span class="knob"><svg width="24" height="22" viewBox="0 0 24 22"><path d="M12 19L3 3h18z" fill="#3cae64" stroke="#3cae64" stroke-width="4" stroke-linejoin="round"></path></svg></span>
            </button>
          </div>
        </article>
      </section>`;
  }

  private bottom() {
    const icon = (body: unknown) => html`<svg width="64" height="60" viewBox="0 0 64 60" fill="none" stroke="#8c8c8f" stroke-width="3" stroke-linecap="round" stroke-linejoin="round">${body}</svg>`;
    return html`
      <footer class="bottom">
        <div class="index">
          <svg class="index-arrow" width="22" height="17" viewBox="0 0 22 8"><path d="M11 0l11 8H0z" fill="#8c8c8f"></path></svg>
          <span class="index-value">3877.16</span>
          <span class="index-name">上证</span><span class="index-change">0.18%</span>
        </div>
        <button class="action">${icon(svg`<path d="M17 8A27 27 0 0 1 57 42M57 42l-1-7M57 42l6-4M48 53A27 27 0 0 1 9 16M9 16l-7 4M9 16l2 6M23 17l9 13 9-13M32 30v15M22 30h20M22 38h20"></path>`)}交易</button>
        <button class="action">${icon(svg`<path d="M42 3H12q-6 0-6 6v42q0 6 6 6h40q6 0 6-6V19"></path><path d="M24 40l3-8L48 9l4 4-20 22zM51 5l3-2 3 3-2 3z" fill="#8c8c8f" stroke-width="2"></path>`)}发帖</button>
        <button class="action">${icon(svg`<rect x="7" y="5" width="22" height="23" rx="3"></rect><rect x="7" y="33" width="22" height="23" rx="3"></rect><rect x="34" y="33" width="22" height="23" rx="3"></rect><path d="M43 5q2-2 4 0l9 9q2 2 0 4l-9 10q-2 2-4 0l-9-10q-2-2 0-4z"></path>`)}功能</button>
        <button class="action">${icon(svg`<circle cx="32" cy="30" r="27"></circle><g fill="#8c8c8f" stroke="none"><circle cx="20" cy="30" r="3"></circle><circle cx="32" cy="30" r="3"></circle><circle cx="44" cy="30" r="3"></circle></g>`)}设自选</button>
      </footer>
      <nav class="nav">
        <button class="nav-button" aria-label="返回"><svg width="28" height="46" viewBox="0 0 28 46"><path d="M25 3L5 20q-3 3 0 6l20 17" fill="none" stroke="#3c3c3c" stroke-width="5" stroke-linecap="round"></path></svg></button>
        <button class="nav-button home" aria-label="主页"><svg width="46" height="46" viewBox="0 0 46 46"><rect x="4" y="4" width="38" height="38" rx="8" fill="none" stroke="#3c3c3c" stroke-width="5"></rect></svg></button>
        <button class="nav-button" aria-label="菜单"><svg width="42" height="42" viewBox="0 0 42 42"><path d="M3 4h36M3 21h36M3 38h36" stroke="#3c3c3c" stroke-width="5" stroke-linecap="round"></path></svg></button>
      </nav>`;
  }

  render() {
    return html`${this.status()}${this.header()}${this.periods()}${this.charts()}${this.promo()}${this.cards()}${this.bottom()}`;
  }
}
